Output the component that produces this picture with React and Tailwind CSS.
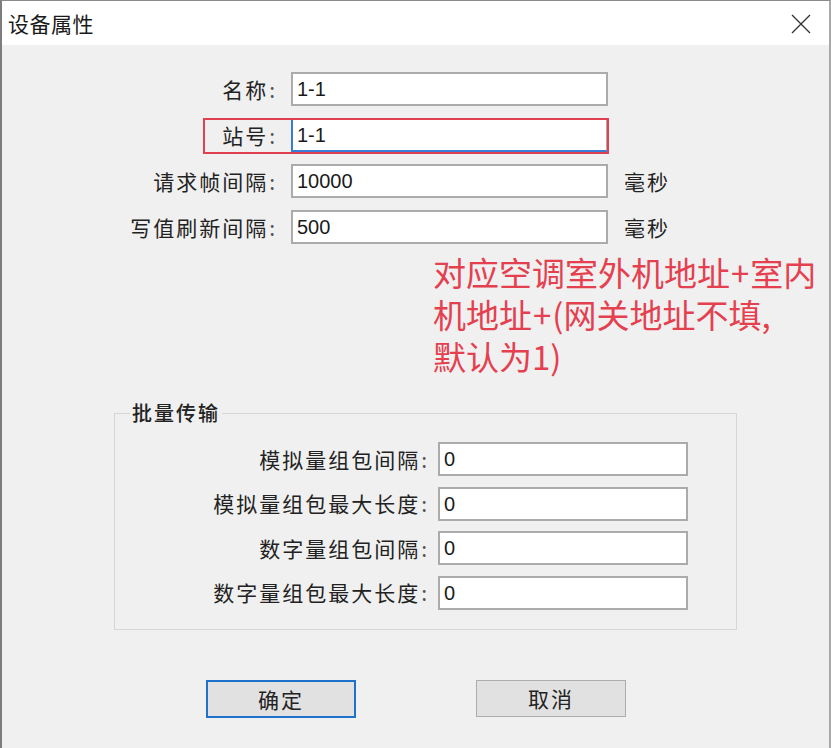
const FONT = "font-['Noto_Sans_CJK_SC','Noto_Sans',sans-serif]";

const Field = ({ value, className = '' }) => (
  <div
    className={`h-[34px] bg-white border-2 border-[#ababab] flex items-center pl-[4px] text-[20px] text-[#1a1a1a] font-['Liberation_Sans','Noto_Sans_CJK_SC',sans-serif] ${className}`}
  >
    {value}
  </div>
);

const Label = ({ text, className }) => (
  <div className={`text-right text-[21px] leading-none text-[#222] ${className}`}>
    <span className="tracking-[2px]">{text}</span>
    <span className="ml-[1px] text-[#555]">:</span>
  </div>
);

const Row = ({ label, value, unit, focused }) => (
  <div className="flex items-center h-[34px]">
    <Label text={label} className="w-[273px]" />
    <Field
      value={value}
      className={`ml-[16px] w-[317px] ${focused ? 'border-l-[#3a7bd5] border-b-[#3a7bd5]' : ''}`}
    />
    {unit && <span className="ml-[16px] text-[21px] leading-none tracking-[2px] text-[#222]">{unit}</span>}
  </div>
);

const BatchRow = ({ label, value }) => (
  <div className="flex items-center h-[34px]">
    <Label text={label} className="w-[312px]" />
    <Field value={value} className="ml-[11px] w-[250px]" />
  </div>
);

export default function App() {
  return (
    <div
      className={`w-[831px] h-[748px] bg-[#f0f0f0] border-t border-t-[#8a8a8a] border-l-2 border-l-[#7d7d7d] border-r-2 border-r-[#a8a8a8] flex flex-col overflow-hidden ${FONT}`}
    >
      {/* 标题栏 */}
      <div className="h-[44px] bg-white flex items-center justify-between pl-[6px] pr-[18px] shrink-0">
        <span className="text-[21px] tracking-[0.5px] text-[#1a1a1a] leading-none">设备属性</span>
        <svg width="20" height="20" viewBox="0 0 20 20" className="mt-[1px]">
          <path d="M1 1 L19 19 M19 1 L1 19" stroke="#333" strokeWidth="1.3" fill="none" />
        </svg>
      </div>

      <div className="relative flex-1 pt-[27px]">
        {/* 红色标注框 */}
        <div className="absolute left-[201px] top-[73px] w-[406px] h-[36px] border-2 border-[#e0404f] pointer-events-none" />

        <div className="flex flex-col gap-[12px]">
          <Row label="名称" value="1-1" />
          <Row label="站号" value="1-1" focused />
          <Row label="请求帧间隔" value="10000" unit="毫秒" />
          <Row label="写值刷新间隔" value="500" unit="毫秒" />
        </div>

        <p className="mt-[7px] pl-[431px] text-[33px] leading-[42px] text-[#e5404f]">
          对应空调室外机地址<span className="mx-[1px]">+</span>室内
          <br />
          机地址<span className="mx-[1px]">+</span>(网关地址不填,
          <br />
          默认为1)
        </p>

        {/* 批量传输 */}
        <div className="relative mt-[36px] ml-[112px] w-[623px] h-[217px] border border-[#d6d6d6] pt-[28px]">
          <span className="absolute -top-[13px] left-[15px] px-[2px] bg-[#f0f0f0] text-[20px] leading-[24px] tracking-[2px] text-[#222] font-medium">
            批量传输
          </span>
          <div className="flex flex-col gap-[10.5px]">
            <BatchRow label="模拟量组包间隔" value="0" />
            <BatchRow label="模拟量组包最大长度" value="0" />
            <BatchRow label="数字量组包间隔" value="0" />
            <BatchRow label="数字量组包最大长度" value="0" />
          </div>
        </div>

        <div className="mt-[50px] flex items-start">
          <button className="ml-[204px] w-[150px] h-[38px] bg-[#e1e1e1] border-2 border-[#1e72c9] text-[21px] tracking-[2px] text-[#222] leading-none">
            确定
          </button>
          <button className="ml-[120px] w-[150px] h-[37px] bg-[#e1e1e1] border border-[#adadad] text-[21px] tracking-[2px] text-[#222] leading-none">
            取消
          </button>
        </div>
      </div>
    </div>
  );
}
